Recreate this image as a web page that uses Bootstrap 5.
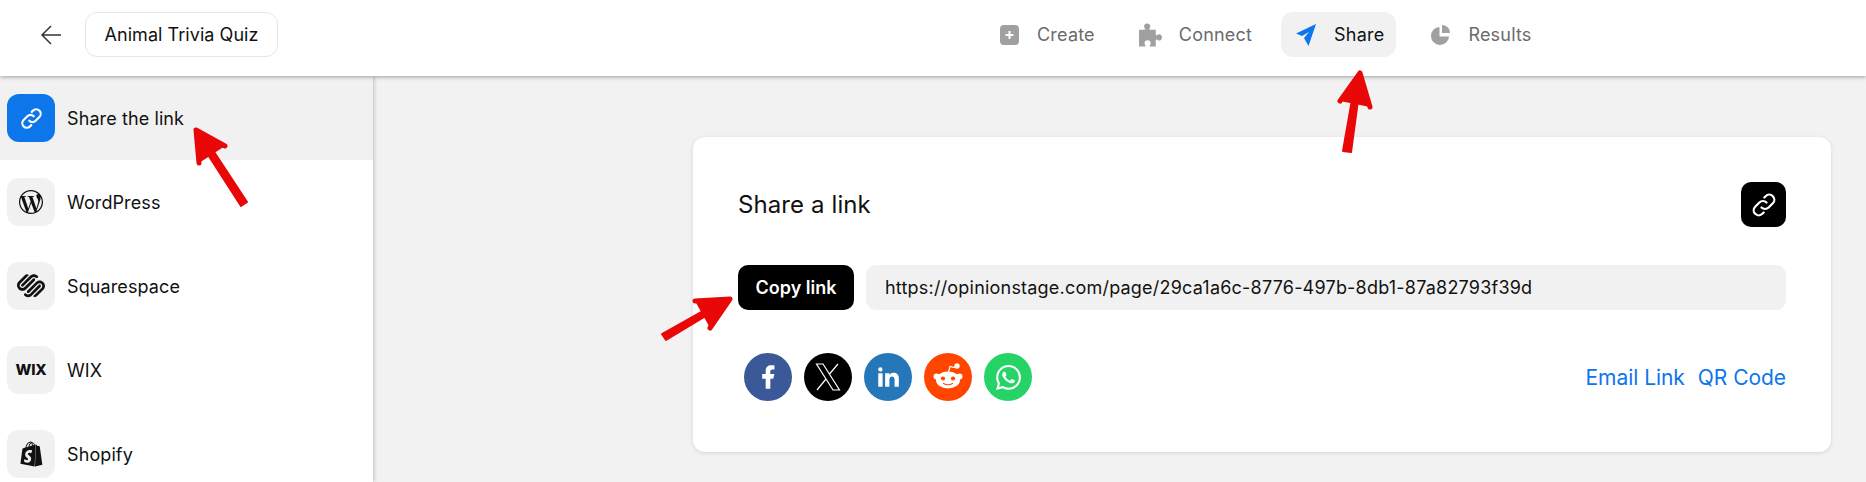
<!DOCTYPE html>
<html lang="en">
<head>
<meta charset="utf-8">
<title>Share</title>
<link rel="stylesheet" href="https://cdn.jsdelivr.net/npm/bootstrap@5.3.0/dist/css/bootstrap.min.css">
<style>
html,body{height:482px;overflow:hidden}
body{font-family:Inter,"Liberation Sans",sans-serif;background:#f2f2f2;color:#111;font-size:18px;letter-spacing:.1px;position:relative}
.top-bar{height:76px;padding-bottom:7px;background:#fff;box-shadow:0 1px 4px rgba(0,0,0,.35);position:relative;z-index:2}
.left-group{width:985px;padding-left:41px;flex:none}
.back-btn{width:20px;height:20px;margin-right:24px}
.quiz-name{height:45px;width:193px;border:1px solid #e6e6e6;border-radius:12px;font-size:18px;letter-spacing:.05px}
.step{height:45px;padding:0 14px;gap:17px;border-radius:12px;color:#6b6b6b;font-size:18px;letter-spacing:.2px}
.step svg{fill:#a0a0a0;flex:none}
.step.on{background:#f1f1f1;color:#111;padding-right:12px;margin-right:5px}
.step.on svg{fill:#0d76ea}
.step-list{gap:15px}
.side{width:373px;height:406px;background:#fff;box-shadow:1px 0 4px rgba(0,0,0,.22);flex:none}
.side-row{height:84px;padding-left:7px;gap:12px;font-size:18px}
.side-row.on{background:#f1f1f1}
.tile{width:48px;height:48px;border-radius:12px;background:#f1f1f1;flex:none}
.side-row.on .tile{background:#0d76ea}
.wix-mark{font-weight:800;font-size:15px;letter-spacing:-.2px;color:#111}
.panel{width:1138px;height:315px;margin:61px 0 0 320px;background:#fff;border-radius:12px;box-shadow:0 1px 4px rgba(0,0,0,.12);padding:45px 45px 0 45px}
.panel-title{font-size:24px;color:#111;font-weight:400}
.square-btn{width:45px;height:45px;background:#000;border-radius:10px;flex:none}
.link-row{margin-top:38px;gap:12px}
.copy-btn{width:116px;height:45px;background:#000;color:#fff;border-radius:10px;font-weight:600;font-size:18px;letter-spacing:0;border:0}
.url-box{height:45px;background:#f1f1f1;border-radius:10px;padding-left:19px;font-size:18px;letter-spacing:.21px;color:#111}
.share-row{margin-top:43px;padding-left:6px}
.circle{width:48px;height:48px;border-radius:50%;margin-right:12px;flex:none}
.c-fb{background:#3b5998}.c-x{background:#000}.c-li{background:#2577b9}.c-rd{background:#ff4500}.c-wa{background:#25d366}
.link-pair{padding-top:2px}
.blue-link{color:#0d76ea;font-size:21px;letter-spacing:-.05px;text-decoration:none;margin-left:13px}
.arrows{position:absolute;left:0;top:0;z-index:5;pointer-events:none}
</style>
</head>
<body>
<header class="top-bar d-flex align-items-center">
  <div class="left-group d-flex align-items-center">
    <svg class="back-btn" viewBox="0 0 20 20" fill="none" stroke="#333" stroke-width="1.5"><path d="M20 10H1M10 1 1 10l9 9"/></svg>
    <div class="quiz-name d-flex align-items-center justify-content-center">Animal Trivia Quiz</div>
  </div>
  <nav class="step-list d-flex align-items-center">
    <div class="step d-flex align-items-center"><svg width="21" height="22" viewBox="0 0 19 22"><path fill-rule="evenodd" d="M4 1h11a4 4 0 0 1 4 4v12a4 4 0 0 1-4 4H4a4 4 0 0 1-4-4V5a4 4 0 0 1 4-4Zm4.500 6v3h-3v2h3v3h2v-3h3v-2h-3V7Z"/></svg><span>Create</span></div>
    <div class="step d-flex align-items-center"><svg width="24" height="24" viewBox="0 0 23 22"><path d="M1 6h5.500c1-1-.7-1.800-.7-3.200C5.800 1.300 7 0 8.800 0s3 1.300 3 2.800c0 1.400-1.700 2.200-.7 3.200H17v5c1 1 1.800-.7 3.200-.7 1.500 0 2.800 1.200 2.800 3s-1.300 3-2.800 3c-1.400 0-2.200-1.700-3.200-.7V22h-5.500c-1-1 .7-1.800.7-3.200 0-1.500-1.200-2.800-3-2.800s-3 1.300-3 2.800c0 1.400 1.700 2.200.7 3.200H1Z"/></svg><span>Connect</span></div>
    <div class="step on d-flex align-items-center"><svg width="22" height="22" viewBox="0 0 20 22"><path d="M20 0 12.500 22 8 14l5-6-7 4L0 9.500Z"/></svg><span>Share</span></div>
    <div class="step d-flex align-items-center"><svg width="21" height="22" viewBox="0 0 19 22"><path d="M8.500 3v9.500h9.500a9 9 0 1 1-9.500-9.500Z"/><path d="M11 1a8 8 0 0 1 8 8h-8Z"/></svg><span>Results</span></div>
  </nav>
</header>
<div class="d-flex">
  <aside class="side">
    <div class="side-row on d-flex align-items-center"><div class="tile d-flex align-items-center justify-content-center"><svg width="25" height="25" viewBox="0 0 20 20" fill="none" stroke="#fff" stroke-width="1.700" stroke-linecap="round"><path d="M8.200 11.800a3.600 3.600 0 0 0 5.100 0l3-3a3.600 3.600 0 0 0-5.100-5.100l-1 1M11.800 8.200a3.600 3.600 0 0 0-5.100 0l-3 3a3.600 3.600 0 0 0 5.100 5.100l1-1"/></svg></div><span>Share the link</span></div>
    <div class="side-row d-flex align-items-center"><div class="tile d-flex align-items-center justify-content-center"><svg width="24" height="24" viewBox="0 0 24 24" fill="#111"><path d="M21.469 6.825c.84 1.537 1.318 3.3 1.318 5.175 0 3.979-2.156 7.456-5.363 9.325l3.295-9.527c.615-1.54.82-2.771.82-3.864 0-.405-.026-.78-.07-1.11m-7.981.105c.647-.03 1.232-.105 1.232-.105.582-.075.514-.93-.067-.899 0 0-1.755.135-2.88.135-1.064 0-2.85-.15-2.85-.15-.585-.03-.661.855-.075.885 0 0 .54.061 1.125.09l1.68 4.605-2.37 7.08L5.354 6.9c.649-.03 1.234-.1 1.234-.1.585-.075.516-.93-.065-.896 0 0-1.746.138-2.874.138-.2 0-.438-.008-.69-.015C4.911 3.15 8.235 1.215 12 1.215c2.809 0 5.365 1.072 7.286 2.833-.046-.003-.091-.009-.141-.009-1.06 0-1.812.923-1.812 1.914 0 .89.513 1.643 1.06 2.531.411.72.89 1.643.89 2.977 0 .915-.354 1.994-.821 3.479l-1.075 3.585-3.9-11.61.001.014zM12 22.784c-1.059 0-2.081-.153-3.048-.437l3.237-9.406 3.315 9.087c.024.053.05.101.078.149-1.12.393-2.325.609-3.582.609M1.211 12c0-1.564.336-3.05.935-4.39L7.29 21.709C3.694 19.96 1.212 16.271 1.211 12M12 0C5.385 0 0 5.385 0 12s5.385 12 12 12 12-5.385 12-12S18.615 0 12 0"/></svg></div><span>WordPress</span></div>
    <div class="side-row d-flex align-items-center"><div class="tile d-flex align-items-center justify-content-center"><svg width="28" height="28" viewBox="0 0 24 24" fill="#111"><path d="M22.655 8.719c-1.802-1.801-4.726-1.801-6.564 0l-7.351 7.35c-.45.45-.45 1.2 0 1.65.45.449 1.2.449 1.65 0l7.351-7.351c.899-.899 2.362-.899 3.264 0 .9.9.9 2.364 0 3.264l-7.239 7.239c.9.899 2.362.899 3.263 0l5.589-5.589c1.836-1.838 1.836-4.763.037-6.563zm-2.475 2.437c-.451-.45-1.201-.45-1.65 0l-7.354 7.389c-.9.899-2.361.899-3.262 0-.45-.45-1.2-.45-1.65 0s-.45 1.2 0 1.649c1.801 1.801 4.726 1.801 6.564 0l7.351-7.35c.449-.487.449-1.238.001-1.688zm-2.476-7.874c-1.801-1.801-4.726-1.801-6.564 0l-7.351 7.351c-.45.449-.45 1.199 0 1.649s1.2.45 1.65 0l7.395-7.351c.9-.899 2.371-.899 3.27 0 .451.45 1.201.45 1.65 0 .45-.45.45-1.2 0-1.649zm-2.475 2.437c-.45-.45-1.2-.45-1.65 0l-7.351 7.389c-.899.9-2.363.9-3.265 0-.9-.9-.9-2.363 0-3.264l7.239-7.239c-.9-.9-2.362-.9-3.263 0L1.35 8.194c-1.8 1.801-1.8 4.726 0 6.563 1.801 1.801 4.725 1.801 6.564 0l7.35-7.351c.414-.45.414-1.2-.035-1.687z"/></svg></div><span>Squarespace</span></div>
    <div class="side-row d-flex align-items-center"><div class="tile wix-mark d-flex align-items-center justify-content-center">WIX</div><span>WIX</span></div>
    <div class="side-row d-flex align-items-center"><div class="tile d-flex align-items-center justify-content-center"><svg width="25" height="28" viewBox="0 0 24 24" fill="#111"><path d="M15.337 23.979l7.216-1.561s-2.604-17.613-2.625-17.73c-.018-.116-.114-.192-.211-.192s-1.929-.136-1.929-.136-1.275-1.274-1.439-1.411c-.045-.037-.075-.057-.121-.074l-.914 21.104h.023zM11.71 11.305s-.81-.424-1.774-.424c-1.447 0-1.504.906-1.504 1.141 0 1.232 3.24 1.715 3.24 4.629 0 2.295-1.44 3.76-3.406 3.76-2.354 0-3.54-1.465-3.54-1.465l.646-2.086s1.245 1.066 2.28 1.066c.675 0 .975-.545.975-.932 0-1.619-2.654-1.694-2.654-4.359-.034-2.237 1.571-4.416 4.827-4.416 1.257 0 1.875.361 1.875.361l-.945 2.715-.02.01zM11.17.83c.136 0 .271.038.405.135-.984.465-2.064 1.639-2.508 3.992-.656.213-1.293.405-1.889.578C7.697 3.75 8.951.84 11.17.84V.83zm1.235 2.949v.135c-.754.232-1.583.484-2.394.736.466-1.777 1.333-2.645 2.085-2.971.193.501.309 1.176.309 2.1zm.539-2.234c.694.074 1.141.867 1.429 1.755-.349.114-.735.231-1.158.366v-.252c0-.752-.096-1.371-.271-1.871v.002zm2.992 1.289c-.02 0-.06.021-.078.021s-.289.075-.714.21c-.423-1.233-1.176-2.37-2.508-2.37h-.115C12.135.209 11.669 0 11.265 0 8.159 0 6.675 3.877 6.21 5.846c-1.194.365-2.063.636-2.16.674-.675.213-.694.232-.772.87-.075.462-1.83 14.063-1.83 14.063L15.009 24l.927-21.166z"/></svg></div><span>Shopify</span></div>
  </aside>
  <main class="panel">
    <div class="d-flex align-items-center justify-content-between">
      <div class="panel-title">Share a link</div>
      <div class="square-btn d-flex align-items-center justify-content-center"><svg width="28" height="28" viewBox="0 0 20 20" fill="none" stroke="#fff" stroke-width="1.600" stroke-linecap="round"><path d="M8.200 11.800a3.600 3.600 0 0 0 5.100 0l3-3a3.600 3.600 0 0 0-5.100-5.100l-1 1M11.800 8.200a3.600 3.600 0 0 0-5.100 0l-3 3a3.600 3.600 0 0 0 5.100 5.100l1-1"/></svg></div>
    </div>
    <div class="link-row d-flex">
      <button class="copy-btn btn p-0" type="button">Copy link</button>
      <div class="url-box flex-grow-1 d-flex align-items-center">https://opinionstage.com/page/29ca1a6c-8776-497b-8db1-87a82793f39d</div>
    </div>
    <div class="share-row d-flex align-items-center">
      <div class="circle c-fb d-flex align-items-center justify-content-center"><svg width="28" height="28" viewBox="0 0 24 24" fill="#fff"><path d="M14 13.500h2.500l1-4H14v-2c0-1.030 0-2 2-2h1.500V2.140c-.326-.043-1.557-.14-2.857-.14C11.928 2 10 3.657 10 6.700v2.800H7v4h3V22h4z"/></svg></div>
      <div class="circle c-x d-flex align-items-center justify-content-center"><svg width="26" height="28" viewBox="0 0 26 28" fill="none" stroke="#fff" stroke-width="1.200"><path d="M1.500 1H8l16.500 26H18ZM23 1l-8.500 10M11 16 2 27"/></svg></div>
      <div class="circle c-li d-flex align-items-center justify-content-center"><svg width="26" height="26" viewBox="0 0 24 24" fill="#fff"><path d="M6.940 5a2 2 0 1 1-4-.002 2 2 0 0 1 4 .002zM7 8.480H3V21h4V8.480zm6.320 0H9.340V21h3.940v-6.570c0-3.660 4.770-4 4.770 0V21H22v-7.930c0-6.170-7.060-5.940-8.720-2.910l.040-1.680z"/></svg></div>
      <div class="circle c-rd d-flex align-items-center justify-content-center"><svg width="34" height="34" viewBox="0 0 34 34" fill="#fff"><circle cx="26" cy="6" r="2.700"/><path d="M17 14.500 19 6.500l5 1.200" fill="none" stroke="#fff" stroke-width="1.200"/><circle cx="5.500" cy="16.500" r="3"/><circle cx="28.500" cy="16.500" r="3"/><ellipse cx="17" cy="20" rx="12" ry="8.500"/><circle cx="12" cy="18.500" r="2.100" fill="#ff4500"/><circle cx="22" cy="18.500" r="2.100" fill="#ff4500"/><path d="M12.500 23.500q4.500 2.500 9 0" fill="none" stroke="#ff4500" stroke-width="1.200" stroke-linecap="round"/></svg></div>
      <div class="circle c-wa d-flex align-items-center justify-content-center"><svg width="25" height="25" viewBox="0 0 24 24" fill="#fff"><path d="M17.472 14.382c-.297-.149-1.758-.867-2.030-.967-.273-.099-.471-.148-.670.150-.197.297-.767.966-.940 1.164-.173.199-.347.223-.644.075-.297-.150-1.255-.463-2.390-1.475-.883-.788-1.480-1.761-1.653-2.059-.173-.297-.018-.458.130-.606.134-.133.298-.347.446-.520.149-.174.198-.298.298-.497.099-.198.050-.371-.025-.520-.075-.149-.669-1.612-.916-2.207-.242-.579-.487-.500-.669-.510-.173-.008-.371-.010-.570-.010-.198 0-.520.074-.792.372-.272.297-1.040 1.016-1.040 2.479 0 1.462 1.065 2.875 1.213 3.074.149.198 2.096 3.200 5.077 4.487.709.306 1.262.489 1.694.625.712.227 1.360.195 1.871.118.571-.085 1.758-.719 2.006-1.413.248-.694.248-1.289.173-1.413-.074-.124-.272-.198-.570-.347m-5.421 7.403h-.004a9.870 9.870 0 01-5.031-1.378l-.361-.214-3.741.982.998-3.648-.235-.374a9.860 9.860 0 01-1.510-5.260c.001-5.450 4.436-9.884 9.888-9.884 2.640 0 5.122 1.030 6.988 2.898a9.825 9.825 0 012.893 6.994c-.003 5.450-4.437 9.884-9.885 9.884m8.413-18.297A11.815 11.815 0 0012.050 0C5.495 0 .160 5.335.157 11.892c0 2.096.547 4.142 1.588 5.945L.057 24l6.305-1.654a11.882 11.882 0 005.683 1.448h.005c6.554 0 11.890-5.335 11.893-11.893a11.821 11.821 0 00-3.480-8.413z"/></svg></div>
      <div class="link-pair ms-auto d-flex"><a class="blue-link" href="#">Email Link</a><a class="blue-link" href="#">QR Code</a></div>
    </div>
  </main>
</div>
<svg class="arrows" width="1866" height="482" fill="#ea0707" stroke="#ea0707" stroke-linecap="round" stroke-linejoin="round">
  <path stroke-width="2" d="M241 206 247 202 201 132 196 136Z"/><path stroke-width="5" d="M199 163 196 130 225 146"/>
  <path stroke-width="2" d="M1343 151 1351 152 1361 78 1356 77Z"/><path stroke-width="5" d="M1340 101 1360 73 1370 107"/>
  <path stroke-width="2" d="M662 334 666 340 729 302 726 298Z"/><path stroke-width="5" d="M695 301 730 299 710 328"/>
</svg>
</body>
</html>
